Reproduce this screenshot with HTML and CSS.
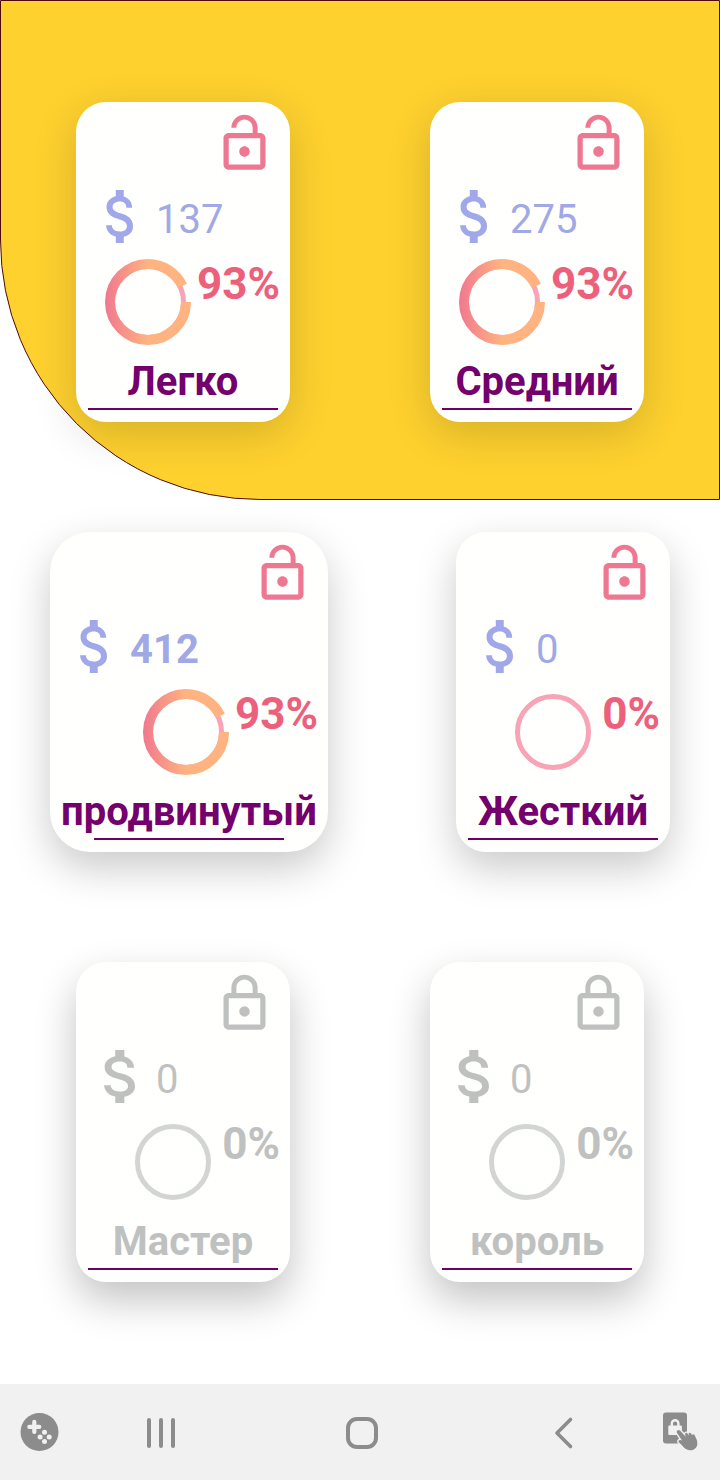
FILE: index.html
```html
<!DOCTYPE html>
<html lang="ru">
<head>
    <meta charset="UTF-8">
    <meta name="viewport" content="width=device-width, initial-scale=1.0">
    <title>Выбор уровня</title>
    <link rel="stylesheet" href="styles.css">
</head>
<body>
    <!-- общие иконки -->
    <svg class="sprite" aria-hidden="true">
        <defs>
            <linearGradient id="ring-gradient" gradientUnits="userSpaceOnUse" x1="1" y1="0" x2="44" y2="0">
                <stop offset="0" stop-color="#f0788f"/>
                <stop offset="1" stop-color="#ffb380"/>
            </linearGradient>
            <symbol id="lock-open" viewBox="0 0 24 24">
                <path d="M12 17c1.1 0 2-.9 2-2s-.9-2-2-2-2 .9-2 2 .9 2 2 2zm6-9h-1V6c0-2.760-2.240-5-5-5S7 3.240 7 6h1.900c0-1.710 1.390-3.100 3.100-3.100s3.100 1.390 3.100 3.100v2H6c-1.100 0-2 .9-2 2v10c0 1.100.9 2 2 2h12c1.100 0 2-.9 2-2V10c0-1.100-.9-2-2-2zm0 12H6V10h12v10z"/>
            </symbol>
            <symbol id="lock-closed" viewBox="0 0 24 24">
                <path fill-rule="evenodd" d="M18 8h-1V6c0-2.760-2.240-5-5-5S7 3.240 7 6v2H6c-1.100 0-2 .9-2 2v10c0 1.100.9 2 2 2h12c1.100 0 2-.9 2-2V10c0-1.100-.9-2-2-2zM8.900 6c0-1.710 1.390-3.100 3.100-3.100s3.100 1.390 3.100 3.100v2H8.900V6zM18 20H6V10h12v10z"/>
                <circle cx="12" cy="15" r="2"/>
            </symbol>
            <symbol id="dollar" viewBox="6.3 3 10.2 18" preserveAspectRatio="none">
                <path d="M11.8 10.9c-2.270-.59-3-1.200-3-2.150 0-1.090 1.010-1.850 2.700-1.850 1.780 0 2.440.85 2.500 2.100h2.210c-.07-1.720-1.120-3.300-3.210-3.810V3h-3v2.160c-1.940.42-3.500 1.680-3.500 3.610 0 2.310 1.910 3.460 4.700 4.130 2.500.6 3 1.480 3 2.410 0 .69-.49 1.790-2.700 1.790-2.060 0-2.870-.92-2.980-2.100h-2.200c.12 2.190 1.760 3.420 3.680 3.830V21h3v-2.150c1.950-.37 3.500-1.500 3.500-3.550 0-2.840-2.430-3.810-4.700-4.400z"/>
            </symbol>
            <symbol id="ring" viewBox="0 0 88 88">
                <circle class="ring-track" cx="44" cy="44" r="35.5"/>
            </symbol>
            <symbol id="ring-93" viewBox="0 0 88 88">
                <circle class="ring-track" cx="44" cy="44" r="35.5"/>
                <circle class="ring-value" cx="44" cy="44" r="38" pathLength="100" stroke-dasharray="93 7"/>
            </symbol>
        </defs>
    </svg>

    <main class="levels">
        <div class="hero"></div>

        <div class="rows">
            <div class="row row-top">
                <button class="card">
                    <svg class="lock"><use href="#lock-open"/></svg>
                    <span class="money">
                        <svg class="dollar"><use href="#dollar"/></svg>
                        <span class="amount">137</span>
                    </span>
                    <span class="progress">
                        <svg class="ring"><use href="#ring-93"/></svg>
                        <span class="percent">93%</span>
                    </span>
                    <span class="title">Легко</span>
                </button>
                <button class="card">
                    <svg class="lock"><use href="#lock-open"/></svg>
                    <span class="money">
                        <svg class="dollar"><use href="#dollar"/></svg>
                        <span class="amount">275</span>
                    </span>
                    <span class="progress">
                        <svg class="ring"><use href="#ring-93"/></svg>
                        <span class="percent">93%</span>
                    </span>
                    <span class="title">Средний</span>
                </button>
            </div>

            <div class="row row-wide">
                <button class="card card-wide">
                    <svg class="lock"><use href="#lock-open"/></svg>
                    <span class="money">
                        <svg class="dollar"><use href="#dollar"/></svg>
                        <span class="amount amount-bold">412</span>
                    </span>
                    <span class="progress">
                        <svg class="ring"><use href="#ring-93"/></svg>
                        <span class="percent">93%</span>
                    </span>
                    <span class="title">продвинутый</span>
                </button>
                <button class="card">
                    <svg class="lock"><use href="#lock-open"/></svg>
                    <span class="money">
                        <svg class="dollar"><use href="#dollar"/></svg>
                        <span class="amount">0</span>
                    </span>
                    <span class="progress">
                        <svg class="ring"><use href="#ring"/></svg>
                        <span class="percent">0%</span>
                    </span>
                    <span class="title">Жесткий</span>
                </button>
            </div>

            <div class="row">
                <button class="card locked">
                    <svg class="lock"><use href="#lock-closed"/></svg>
                    <span class="money">
                        <svg class="dollar"><use href="#dollar"/></svg>
                        <span class="amount">0</span>
                    </span>
                    <span class="progress">
                        <svg class="ring"><use href="#ring"/></svg>
                        <span class="percent">0%</span>
                    </span>
                    <span class="title">Мастер</span>
                </button>
                <button class="card locked">
                    <svg class="lock"><use href="#lock-closed"/></svg>
                    <span class="money">
                        <svg class="dollar"><use href="#dollar"/></svg>
                        <span class="amount">0</span>
                    </span>
                    <span class="progress">
                        <svg class="ring"><use href="#ring"/></svg>
                        <span class="percent">0%</span>
                    </span>
                    <span class="title">король</span>
                </button>
            </div>
        </div>
    </main>

    <nav class="navbar">
        <button class="nav-button" aria-label="Игровая панель">
            <svg width="40" height="40" viewBox="0 0 40 40">
                <circle cx="19.500" cy="20" r="19" fill="#8c8c8c"/>
                <path d="M14.300 9.900v10M9.300 14.900h10" stroke="#f1f1f1" stroke-width="4.200" stroke-linecap="round"/>
                <g fill="#f1f1f1">
                    <circle cx="24.500" cy="20.300" r="2.500"/>
                    <circle cx="20.100" cy="24.900" r="2.500"/>
                    <circle cx="29.200" cy="24.900" r="2.500"/>
                    <circle cx="24.500" cy="29.500" r="2.500"/>
                </g>
            </svg>
        </button>
        <div class="nav-main">
            <button class="nav-button" aria-label="Недавние">
                <svg width="30" height="34" viewBox="0 0 30 34">
                    <path d="M3 5v26M15 5v26M27 5v26" stroke="#8c8c8c" stroke-width="4" stroke-linecap="round"/>
                </svg>
            </button>
            <button class="nav-button" aria-label="Домой">
                <svg width="32" height="34" viewBox="0 0 32 34">
                    <rect x="2" y="4" width="28" height="28" rx="9" fill="none" stroke="#8c8c8c" stroke-width="4"/>
                </svg>
            </button>
            <button class="nav-button" aria-label="Назад">
                <svg width="18" height="34" viewBox="0 0 18 34">
                    <path d="M16.500 4.500L3 18l13.500 13.500" fill="none" stroke="#8c8c8c" stroke-width="3.600" stroke-linecap="round" stroke-linejoin="round"/>
                </svg>
            </button>
        </div>
        <button class="nav-button" aria-label="Блокировка касаний">
            <svg width="36" height="40" viewBox="3.500 0 36 40">
                <rect x="2.500" y="0.500" width="24" height="31" rx="3" fill="#8c8c8c"/>
                <path d="M11.300 14v-2.500a3.300 3.300 0 0 1 6.600 0V14" fill="none" stroke="#f1f1f1" stroke-width="2.400"/>
                <rect x="7.800" y="13.500" width="13.600" height="9.500" rx="1" fill="#f1f1f1"/>
                <path class="hand" transform="translate(2.500 1.500) scale(.93)" d="M15.500 18.300c1-.9 2.200-.7 3 .2l6 6.400-.7-2.300c-.4-1.600 1.600-2.500 2.500-1.100l1.700 2.500-.4-1.600c-.4-1.600 1.600-2.300 2.500-.9l1.300 2.200c-.1-1.500 1.800-1.900 2.500-.5 1.500 3.200 3.500 6.300 3 10-.6 4-4.200 6.600-8 6.400-3.400-.2-6.500-2.300-8.300-5.100l-3.600-3.500c-1.100-1.400.4-3 2-2.400l1.600.6-5.300-8c-.8-1.200-.7-2.200.2-2.900z"/>
            </svg>
        </button>
    </nav>
</body>
</html>
```
FILE: styles.css
```css
* {
    box-sizing: border-box;
}
body {
    margin: 0;
    min-height: 100vh;
    display: flex;
    flex-direction: column;
    background: #fff;
    font-family: Roboto, "Noto Sans", sans-serif;
}
button {
    border: none;
    background: none;
    padding: 0;
    font-family: inherit;
    cursor: pointer;
}
svg {
    display: block;
    flex: none;
}
.sprite {
    position: absolute;
    width: 0;
    height: 0;
}

/* фон и карточки лежат в одной ячейке */
.levels {
    flex: 1;
    display: grid;
    align-items: start;
    overflow: hidden;
}
.hero,
.rows {
    grid-area: 1 / 1;
}
.hero {
    height: 500px;
    background: #fed12f;
    border: 1px solid #4d0a12;
    border-bottom-left-radius: 260px;
}
.rows {
    display: flex;
    flex-direction: column;
    gap: 110px;
    padding: 102px 0;
}
.row {
    display: flex;
    justify-content: space-between;
    padding: 0 76px;
}
.row-wide {
    padding: 0 50px;
}

.card {
    display: flex;
    flex-direction: column;
    gap: 15px;
    min-width: 214px;
    padding: 10px 10px 12px;
    border-radius: 30px;
    background: #fffffe;
    box-shadow: 0 16px 40px rgba(0, 0, 0, 0.21);
    color: #73006c;
}
.row-top .card {
    box-shadow: 0 12px 44px rgba(0, 0, 0, 0.16);
}
.card-wide {
    min-width: 278px;
    border-radius: 40px;
}
.lock {
    align-self: flex-end;
    width: 63px;
    height: 63px;
    margin-right: 4px;
    fill: #ee7891;
}
.money {
    display: flex;
    align-items: flex-end;
}
.dollar {
    width: 27px;
    height: 53px;
    margin: 0 23px 0 20px;
    fill: #a0a8ea;
}
.amount {
    font-size: 40px;
    line-height: 46px;
    font-weight: 400;
    color: #a0a8e6;
}
.amount-bold {
    font-weight: 700;
}
.progress {
    display: flex;
    align-self: flex-end;
    align-items: flex-start;
    gap: 5px;
}
.ring {
    width: 88px;
    height: 88px;
    fill: none;
    stroke: #f8a3b6;
}
.ring-track {
    stroke-width: 5;
}
.ring-value {
    stroke: url(#ring-gradient);
    stroke-width: 10;
}
.percent {
    font-size: 44px;
    line-height: 52px;
    font-weight: 700;
    color: #ed607c;
}
.title {
    align-self: center;
    font-size: 40px;
    line-height: 42px;
    font-weight: 700;
}
.title::after {
    content: "";
    display: block;
    width: 190px;
    height: 2px;
    margin: 5px auto 0;
    background: #6b0066;
}

.locked {
    box-shadow: 0 18px 40px rgba(0, 0, 0, 0.24);
    color: #bfc1c0;
}
.locked .lock,
.locked .dollar {
    fill: #bfc1c0;
}
.locked .dollar {
    width: 31px;
    margin: 0 21px 0 18px;
}
.locked .ring {
    stroke: #d3d5d4;
}
.locked .amount,
.locked .percent {
    color: #bfc1c0;
}

.navbar {
    display: flex;
    align-items: center;
    height: 96px;
    padding: 0 20px;
    background: #f1f1f1;
}
.nav-main {
    flex: 1;
    display: grid;
    grid-template-columns: repeat(3, 1fr);
    justify-items: center;
    align-items: center;
}
.navbar svg {
    overflow: visible;
}
.hand {
    fill: #8c8c8c;
    stroke: #f1f1f1;
    stroke-width: 3;
    paint-order: stroke;
}
```
